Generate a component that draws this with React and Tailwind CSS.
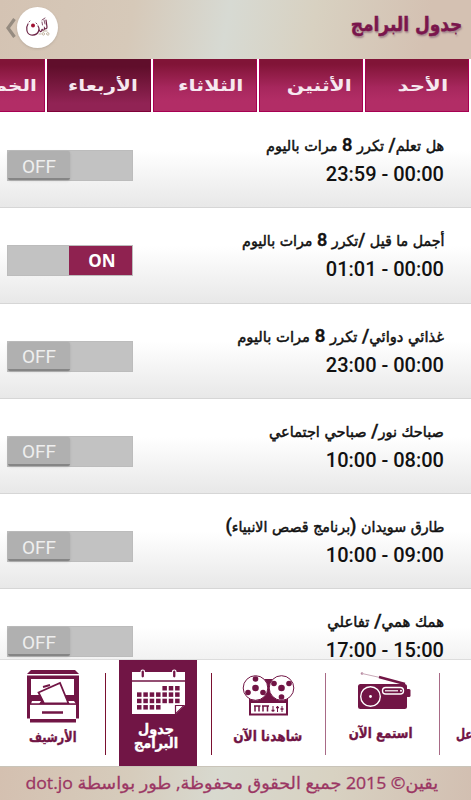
const TABS = [
  { label: 'الخميس', pad: 'pr-[7px]', scale: 'scale-x-[1.25]' },
  { label: 'الأربعاء', pad: 'pr-[12px]', scale: 'scale-x-[1.25]', active: true },
  { label: 'الثلاثاء', pad: 'pr-[13px]', scale: 'scale-x-[1.3]' },
  { label: 'الأثنين', pad: 'pr-[10px]', scale: 'scale-x-[1.28]' },
  { label: 'الأحد', pad: 'pr-[20px]', scale: 'scale-x-[1.33]' },
]

const PROGRAMS = [
  { title: 'هل تعلم/ تكرر 8 مرات باليوم', time: '23:59 - 00:00', on: false, scale: 'scale-x-[0.962]' },
  { title: 'أجمل ما قيل /تكرر 8 مرات باليوم', time: '01:01 - 00:00', on: true, scale: 'scale-x-[0.948]' },
  { title: 'غذائي دوائي/ تكرر 8 مرات باليوم', time: '23:00 - 00:00', on: false, scale: 'scale-x-[0.98]' },
  { title: 'صباحك نور/ صباحي اجتماعي', time: '10:00 - 08:00', on: false, scale: 'scale-x-[0.967]' },
  { title: 'طارق سويدان (برنامج قصص الانبياء)', time: '10:00 - 09:00', on: false, scale: 'scale-x-[0.95]' },
  { title: 'همك همي/ تفاعلي', time: '17:00 - 15:00', on: false, scale: 'scale-x-[0.99]' },
]

export default function App() {
  return (
    <div className="flex h-[800px] w-[471px] flex-col overflow-hidden bg-white font-['DejaVu_Sans',sans-serif]">
      <Header />
      <Tabs />
      <main className="min-h-0 flex-1 overflow-hidden">
        {PROGRAMS.map((p) => (
          <ProgramRow key={p.title} {...p} />
        ))}
      </main>
      <BottomNav />
      <footer className="flex h-[34px] shrink-0 items-start justify-center border-t border-[#c9c4b9] bg-[linear-gradient(100deg,#d4c0b0,#d6ccbc_28%,#d8d9cf_46%,#d8d2c2_70%,#d2bfb1)] pt-[7px] pr-[8px] text-[#9b3663]">
        <p
          dir="rtl"
          className="origin-center scale-x-[1.038] font-['Open_Sans','DejaVu_Sans',sans-serif] text-[17px] leading-none whitespace-nowrap [-webkit-text-stroke:0.3px_#9b3663]"
        >
          يقين© 2015 جميع الحقوق محفوظة, طور بواسطة dot.jo
        </p>
      </footer>
    </div>
  )
}

function Header() {
  return (
    <header className="flex h-[59px] shrink-0 items-start justify-between bg-[linear-gradient(100deg,#d4c3b3,#d6c9b9_28%,#d7dad3_48%,#d8d1c1_66%,#d4c1b2_90%)] pr-[9px] pl-[5px]">
      <div className="flex items-center pt-[7px]">
        <svg width="12" height="20" viewBox="0 0 12 20" className="text-[#958b80]">
          <path d="M9.500 1 3 10l6.500 9" fill="none" stroke="currentColor" strokeWidth="3.200" />
        </svg>
        <div className="flex size-[41px] items-center justify-center rounded-full bg-white shadow-sm">
          <Logo />
        </div>
      </div>
      <h1
        dir="rtl"
        className="origin-right scale-x-[0.85] pt-[11px] text-[20px] leading-[26px] font-bold whitespace-nowrap text-[#7a164c] [-webkit-text-stroke:0.4px_#7a164c] [text-shadow:1px_2px_2px_#a1848a]"
      >
        جدول البرامج
      </h1>
    </header>
  )
}

function Logo() {
  return (
    <svg width="26" height="22" viewBox="0 0 26 22" fill="none" strokeLinecap="round">
      <path d="M3 7C1 10 1 17 6 18c4 .5 7-1.500 8-5 .3-2-.3-3-1-4" stroke="#6b2345" strokeWidth="1.200" />
      <path d="M14 13c2 3 3 1 3-1 1 2 2.500 1.500 2.500-1 1 1.500 2.500 1 2.500-1l-1-7" stroke="#6b2345" strokeWidth="1.200" />
      <path d="M17 5l.5 3M19 3l1 4M17 3l3-2M4 5l1-1M11 6l1 1" stroke="#85506a" strokeWidth="1" />
      <circle cx="8" cy="8.500" r="2" fill="#a11031" />
      <path d="M14 17h1.500M17 17c0-2 2.500-2 2.500 0s-2.500 1-2.500 0M21.500 17c0-2 2.500-2 2.500 0s-2.500 1-2.500 0M18 14h4" stroke="#b9aa94" strokeWidth=".9" />
    </svg>
  )
}

function Tabs() {
  return (
    <nav className="flex h-[54px] shrink-0 justify-end gap-[2px] overflow-hidden pr-[2px] pb-px">
      {TABS.map((t) => (
        <div
          key={t.label}
          className={`flex w-[104px] shrink-0 items-center justify-end border-x border-b bg-linear-to-b pt-[2px] ${t.pad} ${
            t.active
              ? 'border-[#800038] from-[#600e2b] from-15% to-[#912354] to-85%'
              : 'border-[#a70052] from-[#811437] from-10% via-[#a7275d] via-55% to-[#b22d66] to-80%'
          }`}
        >
          <span dir="rtl" className={`origin-right text-[16px] leading-none font-bold whitespace-nowrap text-[#f6e8ef] ${t.scale}`}>
            {t.label}
          </span>
        </div>
      ))}
    </nav>
  )
}

function ProgramRow({ title, time, on, scale }) {
  return (
    <div className="flex h-[95.250px] items-start justify-between border-b border-[#d6d6d6] bg-linear-to-b from-white from-40% to-[#e8e8e8] pr-[27px] pl-[7px]">
      <div className="pt-[37px]">
        <Toggle on={on} />
      </div>
      <div className="flex flex-col items-end pt-[20px] text-[#111]">
        <h2 dir="rtl" className={`h-[26px] origin-right text-[15px] leading-[26px] font-medium whitespace-nowrap [-webkit-text-stroke:0.5px_#111] ${scale}`}>
          {title.split(/([8/()])/).map((part, i) =>
            /^[8/()]$/.test(part) ? (
              <span key={i} className="font-[Roboto] text-[19px] leading-none font-medium">{part}</span>
            ) : (
              part
            ),
          )}
        </h2>
        <p className="mt-[3px] font-[Roboto,sans-serif] text-[20px] leading-[24px] font-medium">{time}</p>
      </div>
    </div>
  )
}

function Toggle({ on }) {
  return (
    <div className={`flex h-[31px] w-[126px] border border-[#bcbcbc] bg-[#c2c2c2] font-[Roboto,sans-serif] ${on ? 'justify-end' : ''}`}>
      {on ? (
        <span className="flex w-[63px] items-center justify-center bg-[#8f2250] pl-[3px] font-['Noto_Sans',sans-serif] text-[17px] leading-none font-bold text-white">
          ON
        </span>
      ) : (
        <span className="flex w-[62px] items-center justify-center rounded-[2px] border-b-2 border-[#858585] bg-[#b0b0b0] pt-[3px] text-[19px] leading-none text-[#eee] shadow-sm">
          OFF
        </span>
      )}
    </div>
  )
}

function BottomNav() {
  return (
    <nav className="flex h-[107px] shrink-0 items-start border-t border-[#ddd] bg-white text-[#711545]">
      <NavItem className="w-[105px] pt-[10px]" icon={<ArchiveIcon />} labelClass="mt-[3px] scale-x-[0.8] text-[14px] leading-[20px]">
        الأرشيف
      </NavItem>
      <Divider className="mr-[13px] bg-[#7a1030]" />
      <NavItem
        className="h-[106px] w-[78px] bg-[#711545] pt-[9px] text-white"
        icon={<CalendarIcon />}
        labelClass="mt-[7px] mr-[4px] scale-x-[0.92] text-[14px] leading-[14px]"
      >
        <span className="block">جدول</span>
        <span className="block">البرامج</span>
      </NavItem>
      <Divider className="ml-[14px] bg-[#7a1030]" />
      <NavItem className="w-[113px] pt-[15px]" icon={<ReelIcon />} labelClass="mt-[10px] mr-[2px] scale-x-[0.87] text-[14px] leading-[20px]">
        شاهدنا الآن
      </NavItem>
      <Divider className="bg-[#a86a86]" />
      <NavItem className="w-[113px] pt-[12px] pl-[3px]" icon={<RadioIcon />} labelClass="mt-[13px] mr-[6px] scale-x-[0.85] text-[14px] leading-[20px]">
        استمع الآن
      </NavItem>
      <Divider className="bg-[#a86a86]" />
      <div dir="ltr" className="flex w-[31px] justify-start overflow-hidden pt-[64px] pl-[16px]">
        <span dir="rtl" className="shrink-0 origin-left scale-x-[0.75] text-[14px] leading-[20px] font-bold whitespace-nowrap [-webkit-text-stroke:0.4px]">
          عل
        </span>
      </div>
    </nav>
  )
}

function NavItem({ icon, children, className, labelClass }) {
  return (
    <div className={`flex shrink-0 flex-col items-center ${className}`}>
      {icon}
      <span dir="rtl" className={`text-center font-bold whitespace-nowrap [-webkit-text-stroke:0.4px] ${labelClass}`}>
        {children}
      </span>
    </div>
  )
}

function Divider({ className }) {
  return <div className={`mt-[13px] h-[82px] w-px shrink-0 ${className}`} />
}

function ArchiveIcon() {
  return (
    <svg width="54" height="54" viewBox="0 0 54 54">
      <path d="M5 0h44l4 4H1z" fill="currentColor" />
      <path d="M1 5.500h52v43h-3v4H4v-4H1z" fill="currentColor" />
      <path d="M5 9h43v16H5z" fill="#fff" />
      <path d="M6 31h9l-2 3H5zM42 31h6l2 3h-8z" fill="#fff" />
      <path d="M17 17l7-2" stroke="currentColor" strokeWidth="2" />
      <path d="M12.500 22.500L34 13l8.500 20.500H18z" fill="#fff" stroke="currentColor" strokeWidth="1.800" />
      <path d="M4 34.500h46v14.500H4z" fill="#fff" />
      <path d="M4 34h46" stroke="currentColor" strokeWidth="1.500" />
      <path d="M16 42.500h21" stroke="currentColor" strokeWidth="2.500" />
    </svg>
  )
}

const CELLS = [
  [4, 5, 6],
  [0, 1, 2, 3, 4, 5, 6],
  [0, 1, 2, 3, 4, 5, 6],
  [0, 1, 2, 3],
]

function CalendarIcon() {
  return (
    <svg width="53" height="46" viewBox="0 0 53 46">
      <path d="M0 3h53v33l-9 9H0z" fill="#fff" />
      <path d="M0 12h53" stroke="#711545" strokeWidth="1.500" />
      <path d="M43.500 45v-8.500H52z" fill="#fff" stroke="#711545" strokeWidth="1.200" />
      {[10.500, 42].map((x) => (
        <rect key={x} x={x - 1.500} y="1" width="3.500" height="8" rx="1.700" fill="#711545" stroke="#fff" strokeWidth="1.200" />
      ))}
      {CELLS.map((row, r) =>
        row.map((c) => <rect key={`${r}-${c}`} x={5 + c * 6.350} y={17 + r * 6.350} width="4.500" height="4.500" fill="#711545" />),
      )}
    </svg>
  )
}

function Reel({ cx, cy, holes }) {
  return (
    <g>
      <circle cx={cx} cy={cy} r="12.300" fill="#fff" stroke="currentColor" strokeWidth="1" />
      <circle cx={cx} cy={cy} r="3.300" fill="currentColor" />
      {holes.map(([x, y]) => (
        <circle key={`${x}-${y}`} cx={cx + x} cy={cy + y} r="2.800" fill="currentColor" />
      ))}
    </g>
  )
}

function ReelIcon() {
  return (
    <svg width="53" height="41" viewBox="0 0 53 41">
      <path d="M22 4h10l-3 17H12v4l-4 2v-4l10-5zM7 24h39v4H7z" fill="currentColor" />
      <path d="M14 22l12-8 14 8 6 3v3H7v-4z" fill="currentColor" />
      <Reel cx={13.500} cy={13} holes={[[0, -9], [-7.500, 4.500], [7.500, 4.500]]} />
      <Reel cx={39.500} cy={13} holes={[[-7.500, -4.500], [7.500, -4.500], [0, 9]]} />
      <rect x="8" y="27" width="37" height="12.500" fill="#fff" stroke="currentColor" strokeWidth="2" />
      <path d="M12 31h6.500M20 31h7M13 31v5.500M17 31v5.500M21 31v5.500M25.500 31v5.500" stroke="currentColor" strokeWidth="1.500" />
      <path d="M31 31v6M35.500 31v6M40 31v6" stroke="currentColor" strokeWidth="1" />
      <path d="M29.500 35.500h3M34 32.500h3M38.500 34h3" stroke="currentColor" strokeWidth="1.500" />
    </svg>
  )
}

function RadioIcon() {
  return (
    <svg width="54" height="38" viewBox="0 0 54 38">
      <circle cx="5" cy="1.500" r="1.300" fill="#b78ba2" />
      <path d="M5 1.500l18 4" stroke="#c9a9b8" strokeWidth="1" />
      <path d="M22 5l26 7" stroke="currentColor" strokeWidth="2.500" />
      <rect x="1" y="12" width="49" height="25" rx="2.500" fill="currentColor" />
      <rect x="49" y="17" width="4.500" height="8" rx="1.500" fill="currentColor" />
      <circle cx="13.500" cy="24.500" r="9.800" fill="none" stroke="#fff" strokeWidth="1.400" />
      <circle cx="13.500" cy="24.500" r="1.400" fill="#fff" />
      <rect x="25.500" y="15.500" width="21" height="6.500" rx="3.200" fill="none" stroke="#fff" strokeWidth="1.400" />
      <path d="M28 18.800h13" stroke="#fff" strokeWidth="1.200" />
      <circle cx="44" cy="18.800" r="1" fill="#fff" />
    </svg>
  )
}
